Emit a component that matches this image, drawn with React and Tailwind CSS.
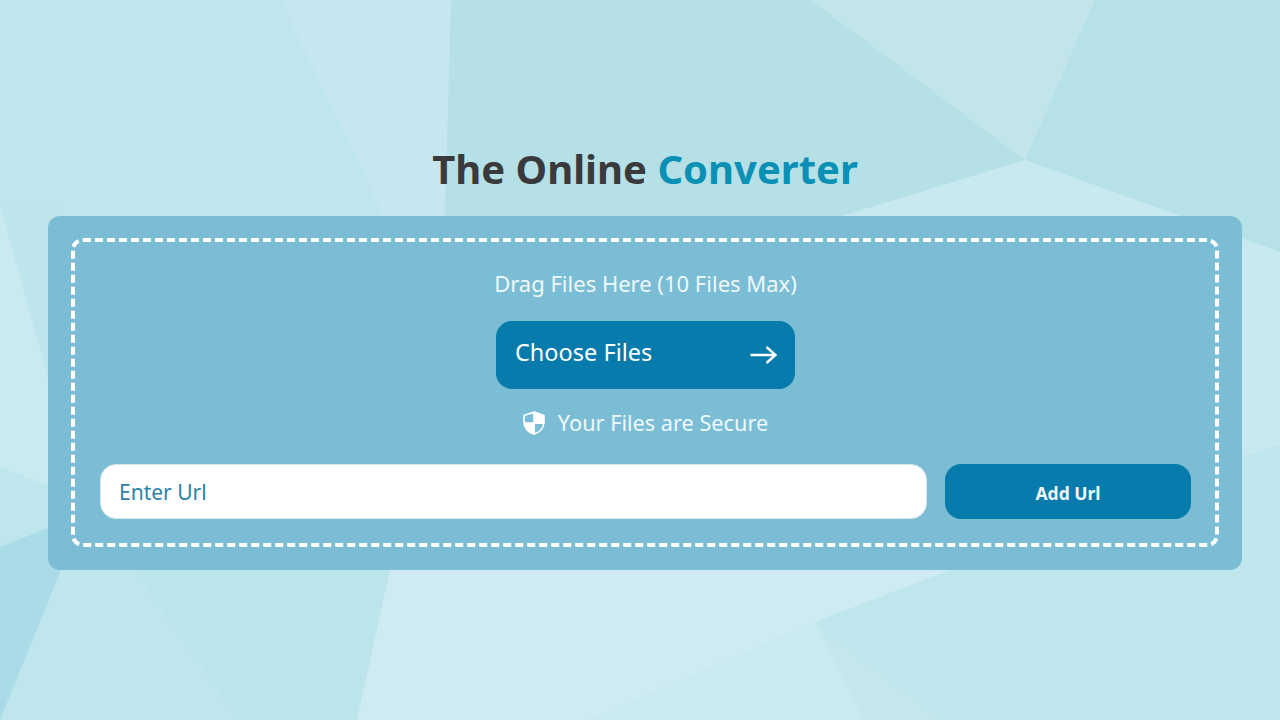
function Background() {
  return (
    <svg className="absolute inset-0 h-full w-full" viewBox="0 0 1280 720" preserveAspectRatio="none" aria-hidden="true">
      <rect width="1280" height="720" fill="#bfe6ec" />
      {/* top */}
      <polygon points="281,0 451,0 445,216 384,216" fill="#c6e7f0" />
      <polygon points="451,0 811,0 1025,160 842,216 445,216" fill="#b5e1e6" />
      <polygon points="811,0 1095,0 1025,160" fill="#c2e5ec" />
      <polygon points="1095,0 1280,0 1280,252 1025,160" fill="#b5e1e7" />
      <polygon points="1025,160 1280,252 1280,445 1230,461 1230,234 842,216" fill="#c8e9f0" />
      {/* left side */}
      <polygon points="0,205 60,420 60,490 0,467" fill="#c9eaf0" />
      <polygon points="0,205 60,205 60,420" fill="#bde5eb" />
      <polygon points="0,547 48,528 61,570 0,720" fill="#a9dce6" />
      {/* bottom */}
      <polygon points="135,570 390,570 357,720 240,720" fill="#bbe5ea" />
      <polygon points="390,570 950,570 815,622 864,720 357,720" fill="#cdebf0" />
      <polygon points="590,720 815,622 864,720" fill="#c9eaf0" />
      <polygon points="815,622 946,720 864,720" fill="#c4e7ed" />
    </svg>
  );
}

function Shield() {
  return (
    <svg width="22" height="24" viewBox="0 0 22 24" className="shrink-0" aria-hidden="true">
      <path d="M11 1 L1 4.5 V11 C1 17 5 21.5 11 23 V12 H1.2 M11 12 H21 V4.5 L11 1 Z" fill="none" stroke="white" strokeWidth="1.6" strokeLinejoin="round" />
      <path d="M11 1 L21 4.5 V11 C21 11.4 21 11.7 20.9 12 H11 Z" fill="white" />
      <path d="M1 12 H11 V23 C5.5 21.5 1.6 17.5 1 12 Z" fill="white" />
      <path d="M11 12 H20.9 C20.3 17.5 16.5 21.5 11 23 Z" fill="none" stroke="white" strokeWidth="1.6" strokeLinejoin="round" />
    </svg>
  );
}

function Arrow() {
  return (
    <svg width="27" height="18" viewBox="0 0 27 18" fill="none" stroke="white" strokeWidth="2.4" aria-hidden="true">
      <path d="M0.5 9 H25.5 M16.5 1 L25.5 9 L16.5 17" />
    </svg>
  );
}

export default function App() {
  return (
    <div className="relative h-screen overflow-hidden font-['Noto_Sans',sans-serif]">
      <Background />
      <div className="relative pt-[143px] pr-[38px] pl-12">
        <h1 className="text-center text-[40px] leading-[52px] font-bold text-[#3a3a3c]">
          The Online <span className="text-[#0a8fb5]">Converter</span>
        </h1>
        <div className="mt-[21px] rounded-xl bg-[#7bbdd5] px-[23px] pt-[22px] pb-[23px]">
          <div className="flex flex-col items-center rounded-xl border-4 border-dashed border-white pt-[21px] pr-6 pb-6 pl-[25px]">
            <p className="text-[22px] leading-[40px] text-[#eef9fc]">Drag Files Here (10 Files Max)</p>
            <button className="mt-[18px] flex h-[68px] w-[299px] items-center justify-between rounded-2xl bg-[#077bab] pr-[18px] pl-[19px] text-[23.5px] text-white">
              <span className="pb-1">Choose Files</span>
              <Arrow />
            </button>
            <div className="mt-4 flex items-center gap-[13px] text-[21.7px] leading-[36px] text-[#eef9fc]">
              <Shield />
              Your Files are Secure
            </div>
            <div className="mt-[23px] flex w-full gap-[18px]">
              <input
                placeholder="Enter Url"
                className="h-[55px] flex-1 rounded-2xl border border-[#d5e6ec] bg-white px-[18px] text-[21px] outline-none placeholder:text-[#2c82a8]"
              />
              <button className="h-[55px] w-[246px] rounded-2xl bg-[#077bab] pt-1 text-[17.5px] font-bold text-[#eef9fc]">Add Url</button>
            </div>
          </div>
        </div>
      </div>
    </div>
  );
}
